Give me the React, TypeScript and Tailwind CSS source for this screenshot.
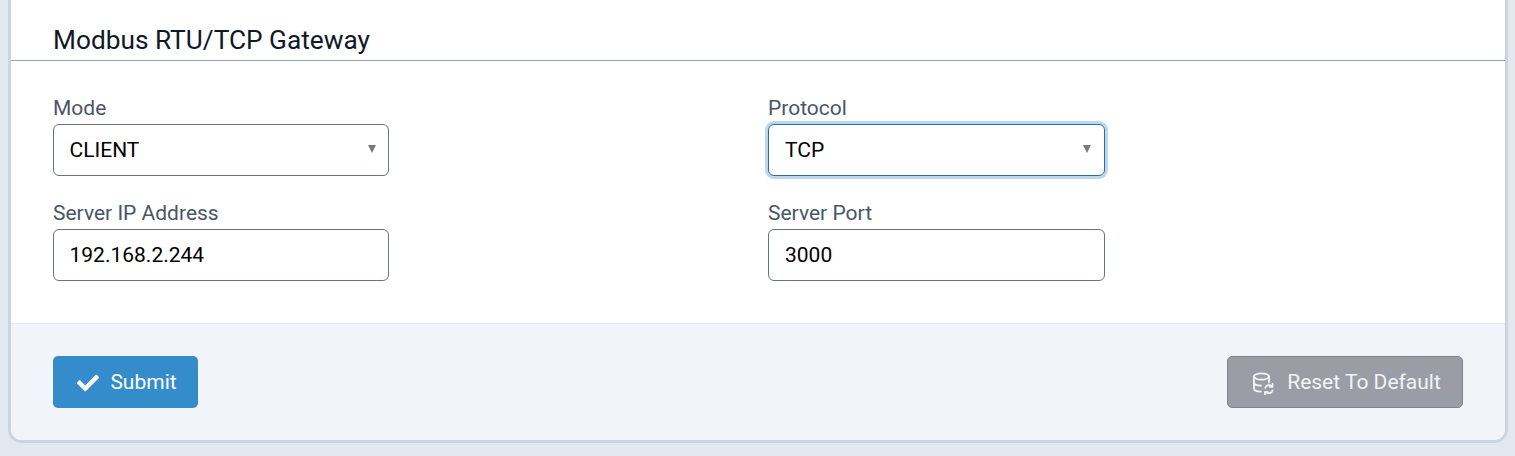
import { FaCheck } from "react-icons/fa";

function Label({ children }: { children: string }) {
  return <label className="block h-[30px] text-[21px] leading-[28px] text-[#4a5568]">{children}</label>;
}

function SelectBox({ value, focused }: { value: string; focused?: boolean }) {
  return (
    <div className="relative w-full">
      <select
        defaultValue={value}
        className={
          focused
            ? "h-[52px] w-full appearance-none rounded-[6px] border border-[#2b6ca3] bg-white px-4 pt-[2px] text-[21px] text-black outline-none ring-[3px] ring-[#bcd8ec]"
            : "h-[52px] w-full appearance-none rounded-[6px] border border-[#6b7280] bg-white pl-[15.5px] pr-4 pt-[2px] text-[21px] text-black outline-none"
        }
      >
        <option>{value}</option>
      </select>
      <svg
        className={focused ? "pointer-events-none absolute right-[14px] top-[21px]" : "pointer-events-none absolute right-[13px] top-[21px]"}
        width="8"
        height="8"
        viewBox="0 0 8 8"
      >
        <path d="M0 0h8L4 8z" fill="#7a7a7a" />
      </svg>
    </div>
  );
}

export default function App() {
  return (
    <div className="h-[456px] overflow-hidden bg-[#e2e8f0] pl-[8px] pr-[7px] font-['Roboto',sans-serif]">
      <div className="h-[443px] overflow-hidden rounded-b-[14px] border-x-[3px] border-b-[3px] border-[#cbd5e1] bg-white">
        <div className="h-[61px] border-b border-[#94a3b8] pl-[42px] pt-[22px] text-[26.25px] leading-[36px] text-[#111827]">
          Modbus RTU/TCP Gateway
        </div>
        <div className="grid h-[262px] grid-cols-[336px_337px] content-start gap-x-[379px] gap-y-[23px] pl-[42px] pt-[33px]">
          <div>
            <Label>Mode</Label>
            <SelectBox value="CLIENT" />
          </div>
          <div>
            <Label>Protocol</Label>
            <SelectBox value="TCP" focused />
          </div>
          <div>
            <Label>Server IP Address</Label>
            <input
              className="h-[52px] w-full rounded-[6px] border border-[#6b7280] bg-white pl-[15.5px] pr-4 text-[21px] text-black outline-none"
              defaultValue="192.168.2.244"
            />
          </div>
          <div>
            <Label>Server Port</Label>
            <input
              className="h-[52px] w-full rounded-[6px] border border-[#6b7280] bg-white px-4 text-[21px] text-black outline-none"
              defaultValue="3000"
            />
          </div>
        </div>
        <div className="flex h-[117px] items-start justify-between border-t border-[#e2e8f0] bg-[#f1f5f9] px-[42px] pt-[32px]">
          <button className="flex h-[52px] w-[145px] items-center justify-center gap-[11px] rounded-[5px] bg-[#348ccb] pl-[3px] pt-[2px] text-[21px] text-white">
            <FaCheck className="h-[22px] w-[22px]" />
            Submit
          </button>
          <button className="flex h-[52px] w-[236px] items-center justify-center gap-[12px] rounded-[5px] border border-[#80848e] bg-[#9a9da6] pl-[3px] pt-[2px] text-[21px] text-[#f3f4f6]">
            <svg width="23" height="23" viewBox="0 0 23 23" fill="none" stroke="currentColor" strokeWidth="1.8" strokeLinecap="round" strokeLinejoin="round">
              <ellipse cx="9.5" cy="4.5" rx="7.5" ry="3.2" />
              <path d="M2 4.5v12c0 1.7 3 3 7 3.2" />
              <path d="M17 4.5v6" />
              <path d="M2 10.5c0 1.7 3 3 7 3.2" />
              <path d="M13.2 16a4 4 0 0 1 6.8-1.6" />
              <path d="M20.5 12v2.8h-2.8" />
              <path d="M20.5 18.5a4 4 0 0 1-6.6 1.6" />
              <path d="M13 22.5v-2.6h2.6" />
            </svg>
            Reset To Default
          </button>
        </div>
      </div>
    </div>
  );
}
